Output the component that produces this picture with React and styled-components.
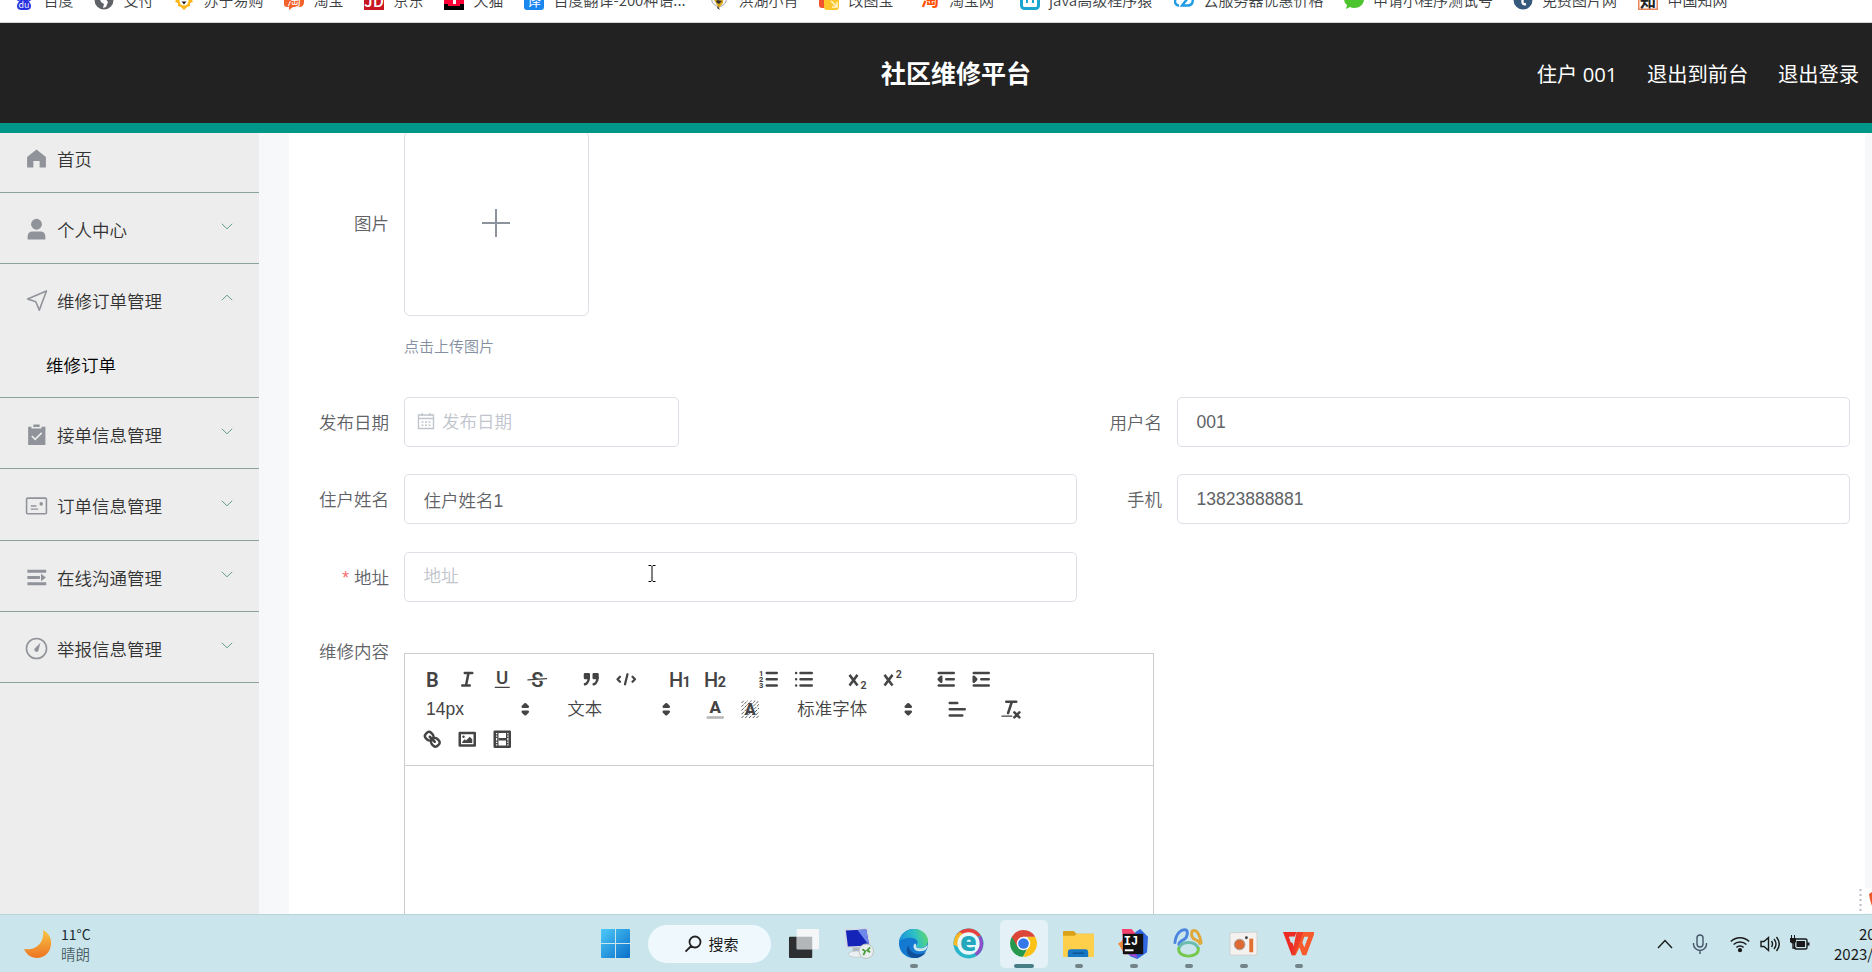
import React from 'react'
import styled, { createGlobalStyle, css } from 'styled-components'

const CJK = "'Noto Sans CJK SC', sans-serif"
const HEADER_FONT = "'Open Sans', 'Noto Sans CJK SC', sans-serif"
const FORM_FONT = "'Liberation Sans', 'Noto Sans CJK SC', sans-serif"

const BOOKMARKS = [
  { label: '百度', icon: 'baidu', width: 80 },
  { label: '支付', icon: 'globe', width: 80 },
  { label: '苏宁易购', icon: 'suning', width: 110 },
  { label: '淘宝', icon: 'taobao', width: 80 },
  { label: '京东', icon: 'jd', width: 80 },
  { label: '天猫', icon: 'tmall', width: 80 },
  { label: '百度翻译-200种语...', icon: 'fanyi', width: 185 },
  { label: '洪湖小肖', icon: 'bee', width: 110 },
  { label: '改图宝', icon: 'gaitu', width: 100.5 },
  { label: '淘宝网', icon: 'tao', width: 100 },
  { label: 'java高级程序猿', icon: 'bili', width: 154.5 },
  { label: '云服务器优惠价格', icon: 'cloud', width: 169.5 },
  { label: '申请小程序测试号', icon: 'wechat', width: 169 },
  { label: '免费图片网', icon: 'photo', width: 125.5 },
  { label: '中国知网', icon: 'cnki', width: 110 },
]

const MENU = [
  { label: '首页', icon: 'home' },
  { label: '个人中心', icon: 'user', arrow: true },
  { label: '维修订单管理', icon: 'send', arrow: true, children: ['维修订单'] },
  { label: '接单信息管理', icon: 'claim', arrow: true },
  { label: '订单信息管理', icon: 'postcard', arrow: true, tall: true },
  { label: '在线沟通管理', icon: 'operation', arrow: true },
  { label: '举报信息管理', icon: 'odometer', arrow: true },
]

const APPS = [
  { name: 'taskview' },
  { name: 'remote' },
  { name: 'edge', running: true },
  { name: 'ie' },
  { name: 'chrome', running: true, active: true },
  { name: 'folder', running: true },
  { name: 'idea', running: true },
  { name: 'navicat', running: true },
  { name: 'recorder', running: true },
  { name: 'wps', running: true },
]

const bookmarkIcons = {
  baidu: (
    <>
      <g fill="#2932e1">
        <ellipse cx="4.5" cy="8" rx="2" ry="3" />
        <ellipse cx="15.5" cy="8" rx="2" ry="3" />
        <path d="M10 8c3 0 7 5 7 8 0 4-3 4-7 4s-7 0-7-4c0-3 4-8 7-8z" />
      </g>
      <text x="10" y="18" fontSize="9" fill="#fff" textAnchor="middle">
        du
      </text>
    </>
  ),
  globe: (
    <>
      <circle cx="10" cy="10" r="9.5" fill="#5f6368" />
      <path d="M5 7l6 1 3 4-2 5-3 1 1-4-3-2z" fill="#fff" />
    </>
  ),
  suning: (
    <>
      <path
        d="M1 6l4-4h10l4 4-1 4 1 2-3 1v3l-3 1-3 3-3-3-3-1v-3l-3-1 1-2z"
        fill="#fdb515"
      />
      <circle cx="10" cy="11" r="4.5" fill="#fff" />
      <path d="M7.5 11.500h5L10 14.500z" fill="#222" />
    </>
  ),
  taobao: (
    <>
      <path
        d="M3 0h14q3 0 3 3v9q0 5-5 5H9l-4 3v-3H3q-3 0-3-3V3q0-3 3-3z"
        fill="#f4622b"
      />
      <text x="10" y="15" fontSize="14" fill="#fff" textAnchor="middle">
        淘
      </text>
    </>
  ),
  jd: (
    <>
      <path fill="#c81623" d="M0 0h20v20H0z" />
      <text
        x="10"
        y="17"
        fontSize="16"
        fontWeight="500"
        fill="#fff"
        textAnchor="middle"
      >
        JD
      </text>
    </>
  ),
  tmall: (
    <>
      <path fill="#000" d="M0 0h20v20H0z" />
      <path fill="#ff0036" d="M0 0h20v14H16v2H4v-2H0z" />
      <path fill="#fff" d="M9 9h3v5H9z" />
    </>
  ),
  fanyi: (
    <>
      <rect width="20" height="20" rx="3" fill="#1a86f0" />
      <text x="10" y="16" fontSize="14" fill="#fff" textAnchor="middle">
        译
      </text>
    </>
  ),
  bee: (
    <>
      <circle cx="10" cy="9" r="7.5" fill="#f4f4f4" stroke="#aaa" />
      <path d="M4 8h10v5l-4 5-2-3z" fill="#d9a91a" />
      <path d="M8 10l5 1-3 3-3-2zM9 16l2 4-3-2z" fill="#333" />
    </>
  ),
  gaitu: (
    <>
      <rect width="12" height="18" rx="3" fill="#f4522d" />
      <rect x="5" y="2" width="15" height="18" rx="3" fill="#fcc62d" />
      <path
        d="M12 11l6 6M18 12v5h-5"
        stroke="#fff3c8"
        strokeWidth="1.6"
        fill="none"
      />
    </>
  ),
  tao: (
    <text
      x="10"
      y="15.5"
      fontSize="18"
      fontWeight="700"
      fill="#ff5000"
      textAnchor="middle"
    >
      淘
    </text>
  ),
  bili: (
    <>
      <rect
        x="1.5"
        y="3"
        width="17"
        height="15.5"
        rx="3"
        fill="#fff"
        stroke="#1ba6cf"
        strokeWidth="3"
      />
      <path d="M6 10h2v3H6zM12 10h2v3h-2z" fill="#1ba6cf" />
    </>
  ),
  cloud: (
    <path
      d="M5 15.5a4 4 0 010-8 6 6 0 0111-1 4.800 4.800 0 01-1 9H8L14 8"
      fill="none"
      stroke="#209ce4"
      strokeWidth="2.400"
    />
  ),
  wechat: (
    <path
      d="M10 0c6 0 10 4 10 9s-4 9-10 9q-2 0-4-1l-4 2 1-4Q0 13 0 9c0-5 4-9 10-9z"
      fill="#4cc42e"
    />
  ),
  photo: (
    <>
      <circle cx="10" cy="10" r="9.500" fill="#36597c" />
      <path
        d="M9.500 5v7q0 3 3.500 2"
        stroke="#fff"
        strokeWidth="2.400"
        fill="none"
      />
    </>
  ),
  cnki: (
    <>
      <path
        d="M.75.75h18.500v18.500H.75z"
        fill="#fff"
        stroke="#e8835a"
        strokeWidth="1.500"
      />
      <text
        x="10"
        y="16.5"
        fontSize="16"
        fontWeight="700"
        fill="#222"
        textAnchor="middle"
      >
        知
      </text>
    </>
  ),
}

const menuIcons = {
  home: (
    <path d="M11 2.500L2 9.500V19.500h6v-6h6v6h6V9.500z" fill="currentColor" />
  ),
  user: (
    <g fill="currentColor">
      <circle cx="11" cy="6" r="5.200" />
      <path d="M2.500 20.500v-2.500q0-5 5-5h7q5 0 5 5v2.500z" />
    </g>
  ),
  send: (
    <path
      d="M20.500 2L2.500 9.600l7.800 2.600 3.400 8z"
      fill="none"
      stroke="currentColor"
      strokeWidth="1.500"
      strokeLinejoin="round"
    />
  ),
  claim: (
    <>
      <path
        d="M3 3.500h3.200v1.800h9.600V3.500H19.500V21H3zM8 1.500h6v2.300H8z"
        fill="currentColor"
      />
      <path
        d="M6.500 12.500l3.200 3.200L16 9.500"
        fill="none"
        stroke="#ededed"
        strokeWidth="1.500"
      />
    </>
  ),
  postcard: (
    <>
      <rect
        x="1.500"
        y="3"
        width="19"
        height="15"
        rx="1"
        fill="none"
        stroke="currentColor"
        strokeWidth="1.500"
      />
      <path
        d="M5.500 10.500H11M5.500 13.500h7"
        stroke="currentColor"
        strokeWidth="1.300"
      />
      <circle cx="15.500" cy="8.500" r="1.700" fill="currentColor" />
    </>
  ),
  operation: (
    <>
      <path
        d="M2.300 5h18M2.300 11h12M2.300 17h18"
        stroke="currentColor"
        strokeWidth="2.800"
      />
      <path d="M15.300 7.300l4.700 3.700-4.700 3.700z" fill="currentColor" />
    </>
  ),
  odometer: (
    <>
      <circle
        cx="11"
        cy="11"
        r="9.600"
        fill="none"
        stroke="currentColor"
        strokeWidth="1.500"
      />
      <path d="M14.700 5.500L12.900 12.800a2 2 0 11-3.400-2z" fill="currentColor" />
    </>
  ),
}

// Toolbar glyphs share an 18-unit grid with 2-unit round strokes
const toolIcons = {
  bold: (
    <Glyph x="9" y="14.800" size="16" weight="600">
      B
    </Glyph>
  ),
  italic: <path d="M7 4h6M5 14h6M8 14L10 4" />,
  underline: (
    <>
      <Glyph x="9" y="13" size="15" weight="500">
        U
      </Glyph>
      <path d="M3 15.500h12" strokeWidth="1" strokeLinecap="butt" />
    </>
  ),
  strike: (
    <>
      <Glyph x="9" y="14.800" size="16" weight="600">
        S
      </Glyph>
      <path d="M3 9.900L15 9.100" stroke="#fff" strokeWidth="1.800" />
      <path d="M1.500 9.500L16.500 8.500" strokeWidth="1" />
    </>
  ),
  quote: (
    <>
      <path d="M4 5h3v3H4zM11 5h3v3h-3z" fill="#444" />
      <path d="M7 8c0 4-3 5-3 5M14 8c0 4-3 5-3 5" />
    </>
  ),
  code: <path d="M4 7L2 9l2 2M14 7l2 2-2 2M10 5L8 13" strokeWidth="1.800" />,
  h1: (
    <>
      <Glyph x="5.700" y="14.800" size="16" weight="500">
        H
      </Glyph>
      <Glyph x="14" y="14.800" size="11.500" weight="700">
        1
      </Glyph>
    </>
  ),
  h2: (
    <>
      <Glyph x="5.700" y="14.800" size="16" weight="500">
        H
      </Glyph>
      <Glyph x="14.200" y="14.800" size="11.500" weight="700">
        2
      </Glyph>
    </>
  ),
  ordered: (
    <>
      <path d="M7 4h8M7 9h8M7 14h8" />
      <Glyph x="2.600" y="6.200" size="6" weight="800">
        1
      </Glyph>
      <Glyph x="2.600" y="11.200" size="6" weight="800">
        2
      </Glyph>
      <Glyph x="2.600" y="16.200" size="6" weight="800">
        3
      </Glyph>
    </>
  ),
  bullet: <path d="M6 4h9M6 9h9M6 14h9M2.500 4h0M2.500 9h0M2.500 14h0" />,
  sub: (
    <>
      <path
        d="M2.800 5.500l6.400 8.500M9.200 5.500l-6.400 8.500"
        strokeLinecap="butt"
      />
      <Glyph x="14" y="16.500" size="8.500" weight="600">
        2
      </Glyph>
    </>
  ),
  sup: (
    <>
      <path
        d="M2.800 5.500l6.400 8.500M9.200 5.500l-6.400 8.500"
        strokeLinecap="butt"
      />
      <Glyph x="14.200" y="8.300" size="8.500" weight="600">
        2
      </Glyph>
    </>
  ),
  outdent: (
    <>
      <path d="M3 4h12M9 9h6M3 14h12" />
      <path d="M5 7v4L3 9z" fill="#444" />
    </>
  ),
  indent: (
    <>
      <path d="M3 4h12M9 9h6M3 14h12" />
      <path d="M3 7v4l2-2z" fill="#444" />
    </>
  ),
  color: (
    <>
      <Glyph x="9" y="12" size="13.500" weight="800">
        A
      </Glyph>
      <path d="M3 15.500h12" opacity=".4" />
    </>
  ),
  background: (
    <>
      <path
        d="M2 4l2-2M2 7l5-5M2 10l8-8M2 13l11-11M2 16L16 2M5 16L16 5M8 16l8-8M11 16l5-5M14 16l2-2"
        strokeWidth=".7"
        strokeDasharray="2.500 .8"
        strokeLinecap="butt"
      />
      <Glyph x="9" y="13.700" size="13" weight="800">
        A
      </Glyph>
    </>
  ),
  align: <path d="M3 4h6M3 9h12M3 14h10" />,
  clean: (
    <>
      <path d="M5 3h8M6.500 12L9.500 3M11.500 11.500l4 4M15.500 11.500l-4 4" />
      <path d="M1.500 14.500h8" strokeWidth="1" />
    </>
  ),
  link: (
    <>
      <path d="M7 7l4 4" />
      <path d="M8.900 4.577a3.476 3.476 0 01.360 4.679A3.476 3.476 0 014.577 8.900C3.185 7.500 2.035 6.400 4.217 4.217S7.500 3.185 8.900 4.577z" />
      <path d="M13.423 9.100a3.476 3.476 0 00-4.679-.360 3.476 3.476 0 00.360 4.679c1.392 1.392 2.500 2.542 4.679.360S14.815 10.500 13.423 9.100z" />
    </>
  ),
  image: (
    <>
      <rect x="3" y="4" width="12" height="10" />
      <circle cx="6" cy="7" r="1" fill="#444" stroke="none" />
      <path d="M5 12v-1l2-2 1 1 3-3 2 2v3z" fill="#444" stroke="none" />
    </>
  ),
  video: (
    <>
      <rect x="3" y="3" width="12" height="12" />
      <path d="M5.500 3v12M12.500 3v12" strokeWidth="1" strokeLinecap="butt" />
      <path d="M6 9h6" strokeLinecap="butt" />
      <path
        d="M4 5.500h1.500M4 7.500h1.500M4 10.500h1.500M4 12.500h1.500M12.500 5.500H14M12.500 7.500H14M12.500 10.500H14M12.500 12.500H14"
        strokeWidth="1"
        strokeLinecap="butt"
      />
    </>
  ),
}

const appIcons = {
  taskview: (
    <>
      <rect x="1" y="9" width="24" height="22" rx="1" fill="#2c2e30" />
      <rect x="9" y="1" width="23" height="21" rx="1" fill="#f4f6f7" />
      <path d="M9 9h16v13H9z" fill="#b3b7b9" />
    </>
  ),
  remote: (
    <>
      <path d="M1 1l25-1 3 20-26 1z" fill="#d3d9e3" />
      <path d="M3 2.500l21-1 3 16.500-22 1z" fill="#1524b8" />
      <path d="M15 2l9-.5 3 16.500z" fill="#6d87ea" />
      <path d="M10 20h8l1 5h-9z" fill="#aeb7be" />
      <ellipse cx="14" cy="27" rx="8.5" ry="3.200" fill="#eceff1" stroke="#b5bdc3" strokeWidth=".6" />
      <circle cx="24" cy="24" r="7.500" fill="#e9eeee" stroke="#b9c1c1" />
      <path
        d="M20 22l3 2-2 4M28 20l-3 3 3 2"
        stroke="#4a9b3b"
        strokeWidth="1.800"
        fill="none"
      />
    </>
  ),
  edge: (
    <>
      <defs>
        <linearGradient id="edgeTop" x1="0" x2="1" y1=".4" y2=".2">
          <stop offset="0" stopColor="#1b93dc" />
          <stop offset=".55" stopColor="#2ec0c4" />
          <stop offset="1" stopColor="#63d968" />
        </linearGradient>
      </defs>
      <circle cx="16" cy="16" r="15" fill="#1479d0" />
      <path
        d="M1 14C3 4 11 1 17 1c9 0 14 7 14 12 0 5-4 8-8 8s-5-2-4-3c3-4 0-8-6-8-5 0-10 2-12 4z"
        fill="url(#edgeTop)"
      />
      <path
        d="M11 18c0 6 6 9 11 9 3 0 5-1 7-2-3 4-7 6-11 6C9 31 7 22 11 18z"
        fill="#10509a"
      />
      <path
        d="M19 18c-1 1 0 3 4 3 3 0 5-1 8-4-1 4-2 5-3 6-5 2-12 1-12-4 0-2 1-3 2-3z"
        fill="#cbe6ec"
      />
    </>
  ),
  ie: (
    <>
      <circle cx="16" cy="16" r="15.5" fill="#29b6c8" />
      <path
        d="M2 10A15.500 15.500 0 0116 .5a15.500 15.500 0 0113 8L16 9z"
        fill="#e8403c"
      />
      <path d="M.5 17A15.500 15.500 0 017 4l6 4-7 12z" fill="#f5b924" />
      <path d="M29 8a15.500 15.500 0 01-5 21l-3-6 4-12z" fill="#8b50c7" />
      <circle cx="16" cy="16" r="11.5" fill="#e9f8fa" />
      <text
        x="16"
        y="24"
        fontSize="28"
        fontWeight="800"
        fontFamily="Open Sans"
        fill="#22a7bd"
        textAnchor="middle"
      >
        e
      </text>
    </>
  ),
  chrome: (
    <>
      <path
        d="M4 9.100A13.800 13.800 0 0015.500 29.800L20.500 20 16 16z"
        fill="#26994f"
      />
      <path
        d="M28 9.100A13.800 13.800 0 0115.500 29.800L21.500 19 20 9.100z"
        fill="#fbc116"
      />
      <path
        d="M4 9.100A13.800 13.800 0 0128 9.100H16L10 19.500z"
        fill="#dc4638"
      />
      <circle cx="16" cy="16" r="7" fill="#fff" />
      <circle cx="16" cy="16" r="5.500" fill="#3678e8" />
    </>
  ),
  folder: (
    <>
      <path d="M0 4q0-1 1-1h10l3 3h17q1 0 1 1v6H0z" fill="#dba117" />
      <path d="M0 8h12l2-2h18v23q0 1-1 1H1q-1 0-1-1z" fill="#fdcf4a" />
      <path d="M5 30v-5q0-3 3-3h15q3 0 3 3v5z" fill="#1777c4" />
      <path d="M10 26h12" stroke="#0c5792" strokeWidth="1.500" />
    </>
  ),
  idea: (
    <>
      <path d="M4 1l10 0 6 7-6 12-9 4-3-6 3-7z" fill="#f5416c" />
      <path d="M0 16l7-4 6 10-5 6z" fill="#f68a3c" />
      <path d="M18 4l5-3 8 8-1 16-10 7-8-3z" fill="#3066e0" />
      <path d="M10 27l8-2 2 6z" fill="#a347d6" />
      <path d="M5 6h21v21H5z" fill="#111" />
      <text
        x="13.500"
        y="17.500"
        fontSize="12.500"
        fontWeight="700"
        fontFamily="Liberation Mono"
        fill="#fff"
        textAnchor="middle"
      >
        IJ
      </text>
      <path d="M7 22h9v2H7z" fill="#fff" />
    </>
  ),
  navicat: (
    <g fill="none" strokeWidth="3" strokeLinecap="round">
      <path
        d="M2 15C3 5 9 1 13 2c3 1 2 8-2 10-4 2-5 3-5 5"
        stroke="#4d86e0"
      />
      <path
        d="M20 3c5-2 8 5 9 12M20 3c-2 4 0 8 3 9 3 1 4 2 5 4"
        stroke="#e0a73b"
      />
      <path d="M6 21c3-8 17-8 20 0" stroke="#69bcae" />
      <path d="M6 21c-1 5 4 8 10 8s11-3 10-8" stroke="#77c84f" />
    </g>
  ),
  recorder: (
    <>
      <path d="M2 5l28-1v24H2z" fill="#f4f1ee" stroke="#c9cfd0" />
      <circle cx="12" cy="17" r="5.500" fill="#dd6a35" stroke="#a2a6a6" />
      <circle cx="19" cy="10" r="1.500" fill="#444" />
      <path d="M22 11h4v14h-4z" fill="#e27030" />
    </>
  ),
  wps: (
    <>
      <path d="M0 4h14l-2 5H7l5 12-3 7z" fill="#ee2a24" />
      <path d="M9 28L20 4h13l-9 24h-4l-3-8-4 8z" fill="#f65b2d" />
      <path d="M14 4h7l-9 24H9z" fill="#ee3a26" />
      <path d="M22 9h4l-4 11-2-5z" fill="#cae6ec" />
      <path d="M6 9h6l-2 6-2 0z" fill="#cae6ec" />
    </>
  ),
}

function Glyph({ x, y, size, weight, children }) {
  return (
    <text
      x={x}
      y={y}
      fontSize={size}
      fontWeight={weight}
      fontFamily="Roboto, sans-serif"
      fill="#444"
      stroke="none"
      textAnchor="middle"
    >
      {children}
    </text>
  )
}

function Chevron({ up }) {
  return (
    <Arrow viewBox="0 0 12 7" $up={up}>
      <path d="M.8.800L6 5.800 11.200.800" fill="none" stroke="currentColor" />
    </Arrow>
  )
}

function Tools({ names }) {
  return (
    <Formats>
      {names.map(name => (
        <ToolButton key={name}>
          <svg viewBox="0 0 18 18">{toolIcons[name]}</svg>
        </ToolButton>
      ))}
    </Formats>
  )
}

function Picker({ label, width }) {
  return (
    <Formats>
      <PickerLabel $width={width}>
        {label}
        <svg viewBox="0 0 18 18">
          <path d="M7 11l2 2 2-2zM7 7l2-2 2 2z" fill="#444" />
        </svg>
      </PickerLabel>
    </Formats>
  )
}

function Field({ label, value, placeholder, required, icon, width }) {
  return (
    <FormItem>
      <Label $required={required}>{label}</Label>
      <Control $width={width} $empty={!value} $icon={icon}>
        {icon}
        {value || placeholder}
      </Control>
    </FormItem>
  )
}

const calendar = (
  <svg viewBox="0 0 18 18" width="18" height="18">
    <path
      d="M1.500 3h15v13.500h-15zM1.500 6.500h15M5 1v3M13 1v3M4.500 10h2M8 10h2M11.500 10h2M4.500 13.200h2M8 13.200h2M11.500 13.200h2"
      fill="none"
      stroke="currentColor"
      strokeWidth="1.400"
    />
  </svg>
)

export default function App() {
  return (
    <Screen>
      <GlobalStyle />
      <BookmarkBar>
        {BOOKMARKS.map(({ label, icon, width }) => (
          <Bookmark key={label} $width={width}>
            <svg viewBox="0 0 20 20">{bookmarkIcons[icon]}</svg>
            {label}
          </Bookmark>
        ))}
      </BookmarkBar>

      <Header>
        <HeaderSide />
        <Title>社区维修平台</Title>
        <HeaderSide>
          <span>住户 001</span>
          <span>退出到前台</span>
          <span>退出登录</span>
        </HeaderSide>
      </Header>

      <Body>
        <Sidebar>
          {MENU.map(({ label, icon, arrow, children, tall }) => (
            <MenuGroup key={label}>
              <MenuItem $tall={tall}>
                <svg viewBox="0 0 22 22">{menuIcons[icon]}</svg>
                <MenuText>{label}</MenuText>
                {arrow && <Chevron up={!!children} />}
              </MenuItem>
              {children &&
                children.map(child => <SubItem key={child}>{child}</SubItem>)}
            </MenuGroup>
          ))}
        </Sidebar>

        <Main>
          <UploadItem>
            <UploadLabel>图片</UploadLabel>
            <div>
              <UploadBox>
                <svg viewBox="0 0 28 28" width="28" height="28">
                  <path
                    d="M14 0v28M0 14h28"
                    stroke="currentColor"
                    strokeWidth="2"
                  />
                </svg>
              </UploadBox>
              <Tip>点击上传图片</Tip>
            </div>
          </UploadItem>
          <Grid>
            <Field
              label="发布日期"
              placeholder="发布日期"
              icon={calendar}
              width="275px"
            />
            <Field label="用户名" value="001" />
            <Field label="住户姓名" value="住户姓名1" />
            <Field label="手机" value="13823888881" />
            <Field label="地址" placeholder="地址" required />
          </Grid>
          <EditorItem>
            <Label>维修内容</Label>
            <Editor>
              <Toolbar>
                <Tools names={['bold', 'italic', 'underline', 'strike']} />
                <Tools names={['quote', 'code']} />
                <Tools names={['h1', 'h2']} />
                <Tools names={['ordered', 'bullet']} />
                <Tools names={['sub', 'sup']} />
                <Tools names={['outdent', 'indent']} />
                <Picker label="14px" width={122.5} />
                <Picker label="文本" width={122.5} />
                <Tools names={['color', 'background']} />
                <Picker label="标准字体" width={135} />
                <Tools names={['align']} />
                <Tools names={['clean']} />
                <Tools names={['link', 'image', 'video']} />
              </Toolbar>
            </Editor>
          </EditorItem>
        </Main>
      </Body>

      <Taskbar>
        <Weather>
          <svg viewBox="0 0 28 30" width="28" height="30">
            <defs>
              <linearGradient id="moon" x1="0" x2="0" y1="0" y2="1">
                <stop offset="0" stopColor="#f8c544" />
                <stop offset="1" stopColor="#ee7422" />
              </linearGradient>
            </defs>
            <path
              d="M19 1c6 3 9 9 8 15-1 8-7 13-14 13C7 29 2 25 0 20c9 2 21-4 19-19z"
              fill="url(#moon)"
            />
          </svg>
          <div>
            <Degrees>11°C</Degrees>
            <Sky>晴朗</Sky>
          </div>
        </Weather>
        <Start viewBox="0 0 29 29">
          <defs>
            <linearGradient id="win" x1="0" x2="1" y1="0" y2="1">
              <stop offset="0" stopColor="#4cc9f8" />
              <stop offset="1" stopColor="#0a6fc9" />
            </linearGradient>
          </defs>
          <path
            d="M1 0h13v14H0V1q0-1 1-1zM15 0h13q1 0 1 1v13H15zM0 15h14v14H1q-1 0-1-1zM15 15h14v13q0 1-1 1H15z"
            fill="url(#win)"
          />
        </Start>
        <Search>
          <svg viewBox="0 0 18 18" width="18" height="18">
            <path
              d="M11 1.500a5.500 5.500 0 110 11 5.500 5.500 0 010-11zM7.200 11L1.500 16.700"
              fill="none"
              stroke="#222"
              strokeWidth="1.800"
            />
          </svg>
          搜索
        </Search>
        {APPS.map(({ name, running, active }) => (
          <AppSlot key={name}>
            <AppTile $active={active}>
              <svg viewBox="0 0 32 32">{appIcons[name]}</svg>
              {running && <Indicator $active={active} />}
            </AppTile>
          </AppSlot>
        ))}
        <Tray>
          <svg viewBox="0 0 16 20" width="16" height="20">
            <path d="M1 14l7-7.500L15 14" />
          </svg>
          <svg viewBox="0 0 16 20" width="16" height="20">
            <rect x="5" y="1" width="6" height="12" rx="3" stroke="#456" />
            <path
              d="M1.500 9v1a6.500 6.500 0 0013 0V9M8 16.500v3.500"
              stroke="#456"
            />
          </svg>
          <svg viewBox="0 0 20 20" width="20" height="20">
            <path d="M.8 7.500a13 13 0 0118.400 0M3.600 10.600a9 9 0 0112.800 0M6.400 13.500a5 5 0 017.200 0" />
            <circle cx="10" cy="16.200" r="1.400" fill="#1a1a1a" />
          </svg>
          <svg viewBox="0 0 20 20" width="20" height="20">
            <path d="M1 7.500h3L8.500 3.500v13L4 12.500H1zM11.500 7q2 3 0 6M14 5q4 5 0 10M16.500 3q5.500 7 0 14" />
          </svg>
          <svg viewBox="0 0 20 20" width="20" height="20">
            <rect x="4.500" y="5" width="12.500" height="10" rx="1.500" />
            <path
              d="M6.500 7h8.500v6H6.500zM17 8.500h2.500v3H17zM0 4h6v4L4 9.500H2L0 8zM1 1h1v3H1zM4 1h1v3H4z"
              fill="#1a1a1a"
              stroke="none"
            />
            <path d="M3 9v5h3" />
          </svg>
        </Tray>
        <Clock>
          <ClockTime>20</ClockTime>
          <div>2023/</div>
        </Clock>
      </Taskbar>

      <FloatingDock>
        <svg viewBox="0 0 15 25" width="15" height="25">
          <path
            d="M3.500 1v24"
            stroke="#b9b9c4"
            strokeWidth="2"
            strokeDasharray="2 3"
          />
          <path d="M12 6l3-2v14q-2-5-3-12z" fill="#f0582a" />
        </svg>
      </FloatingDock>
      <TextCursor viewBox="0 0 8 17">
        <path
          d="M.5.500H3L4 1.500 5 .500h2.500M4 1.500v14M.5 16.500H3l1-1 1 1h2.500"
          fill="none"
          stroke="#000"
        />
      </TextCursor>
    </Screen>
  )
}

const GlobalStyle = createGlobalStyle`
  * {
    box-sizing: border-box;
  }
  body {
    margin: 0;
    overflow: hidden;
  }
  svg {
    display: block;
    flex: none;
  }
`

const Screen = styled.div`
  position: relative;
  display: flex;
  flex-direction: column;
  width: 1872px;
  height: 972px;
  overflow: hidden;
  font-family: ${CJK};
  font-weight: 350;
  background: #fff;
`

const BookmarkBar = styled.nav`
  flex: none;
  display: flex;
  height: 23px;
  padding-left: 14px;
  overflow: hidden;
  background: #fff;
  border-bottom: 1px solid #d5d5d5;
`

const Bookmark = styled.div`
  flex: none;
  display: flex;
  align-items: center;
  gap: 9.5px;
  width: ${p => p.$width}px;
  height: 20px;
  margin-top: -10px;
  font-size: 15px;
  line-height: 20px;
  white-space: nowrap;
  color: #3c4043;
  svg {
    width: 20px;
    height: 20px;
  }
`

const Header = styled.header`
  flex: none;
  display: flex;
  align-items: center;
  height: 110px;
  padding-right: 13px;
  background: #222;
  border-bottom: 10px solid #009688;
  color: #fff;
`

const HeaderSide = styled.div`
  flex: 1;
  display: flex;
  justify-content: flex-end;
  gap: 29.5px;
  padding-left: 52px;
  font-family: ${HEADER_FONT};
  font-size: 20.3px;
  font-weight: 400;
  &:first-child {
    padding-left: 105px;
  }
`

const Title = styled.h1`
  margin: -2px 0 0;
  font-size: 25px;
  font-weight: 700;
`

const Body = styled.div`
  flex: 1;
  min-height: 0;
  display: flex;
  padding-right: 7px;
  overflow: hidden;
  background: #f6f8fa;
`

const Sidebar = styled.aside`
  flex: none;
  width: 259px;
  margin: -11px 30px 0 0;
  background: #ededed;
`

const MenuGroup = styled.div`
  border-bottom: 1px solid #8aa39b;
`

const MenuItem = styled.div`
  display: flex;
  align-items: center;
  height: ${p => (p.$tall ? 71 : 70)}px;
  padding: 0 26px 0 25px;
  color: #909399;
  > svg:first-child {
    width: 23px;
    height: 23px;
    margin-top: 3px;
  }
`

const MenuText = styled.span`
  flex: 1;
  padding: 3px 0 0 9px;
  font-size: 17.5px;
  line-height: 24px;
  color: #333;
`

const Arrow = styled.svg`
  width: 12px;
  height: 7px;
  margin-top: -3px;
  color: #62a088;
  ${p =>
    p.$up &&
    css`
      transform: rotate(180deg);
    `};
`

const SubItem = styled.div`
  height: 63px;
  padding-left: 46px;
  font-size: 17.5px;
  line-height: 62px;
  color: #000;
`

const Main = styled.main`
  flex: 1;
  margin-top: -2px;
  padding: 0 15px;
  background: #fff;
  font-family: ${FORM_FONT};
`

const FormItem = styled.div`
  display: flex;
`

const UploadItem = styled(FormItem)`
  height: 266px;
`

const Label = styled.label`
  flex: none;
  width: 100px;
  padding-right: 15px;
  font-size: 17.5px;
  line-height: 52px;
  text-align: right;
  color: #606266;
  ${p =>
    p.$required &&
    css`
      &::before {
        content: '*';
        margin-right: 5px;
        color: #f56c6c;
      }
    `};
`

const UploadLabel = styled(Label)`
  line-height: 187px;
`

const UploadBox = styled.div`
  display: flex;
  align-items: center;
  justify-content: center;
  width: 185px;
  height: 185px;
  padding: 0 1px 1px 0;
  border: 1px solid #dcdfe6;
  border-radius: 6px;
  color: #8c939d;
`

const Tip = styled.div`
  margin-top: 20px;
  font-size: 15px;
  line-height: 22px;
  color: #838fa1;
`

const Grid = styled.div`
  display: grid;
  grid-template-columns: 1fr 1fr;
  grid-auto-rows: 50px;
  row-gap: 27.4px;
`

const Control = styled.div`
  display: flex;
  align-items: center;
  gap: 7px;
  flex: ${p => (p.$width ? 'none' : 1)};
  width: ${p => p.$width || 'auto'};
  padding: 0 18px ${p => (p.$empty ? 4 : 0)}px ${p => (p.$icon ? 12 : 18.5)}px;
  font-size: 17.5px;
  border: 1px solid #dcdfe6;
  border-radius: 5px;
  color: ${p => (p.$empty ? '#c0c4cc' : '#606266')};
  svg {
    margin-top: 2px;
  }
`

const EditorItem = styled(FormItem)`
  margin-top: 24.2px;
`

const Editor = styled.div`
  width: 750px;
  height: 340px;
  margin-top: 27px;
  border: 1px solid #ccc;
`

const Toolbar = styled.div`
  display: flex;
  flex-wrap: wrap;
  padding: 10px 10px 11px;
  border-bottom: 1px solid #ccc;
`

const Formats = styled.div`
  display: flex;
  height: 30px;
  margin-right: 18.75px;
`

const ToolButton = styled.button`
  width: 35px;
  height: 30px;
  padding: 3.75px 6.25px;
  border: 0;
  background: none;
  svg {
    width: 22.5px;
    height: 22.5px;
    overflow: visible;
    fill: none;
    stroke: #444;
    stroke-width: 2;
    stroke-linecap: round;
    stroke-linejoin: round;
  }
`

const PickerLabel = styled.div`
  display: flex;
  align-items: center;
  justify-content: space-between;
  width: ${p => p.$width}px;
  padding: 0 1.5px 0 11px;
  font-size: 17.5px;
  line-height: 30px;
  color: #444;
  svg {
    width: 22.5px;
    height: 22.5px;
    stroke: #444;
    stroke-width: 2;
    stroke-linejoin: round;
  }
`

const Taskbar = styled.footer`
  flex: none;
  display: flex;
  align-items: center;
  height: 58px;
  overflow: hidden;
  background: #cae6ec;
  border-top: 1px solid #b8d4da;
  > * {
    flex: none;
  }
`

const Weather = styled.div`
  display: flex;
  align-items: center;
  gap: 9.5px;
  width: 601px;
  padding-left: 23.5px;
  font-size: 14.5px;
  line-height: 20px;
`

const Degrees = styled.div`
  font-size: 14px;
  font-weight: 400;
  color: #1b2b30;
`

const Sky = styled.div`
  color: #4c5f66;
`

const Start = styled.svg`
  width: 29px;
  height: 29px;
  margin-right: 18px;
`

const Search = styled.div`
  display: flex;
  align-items: center;
  justify-content: center;
  gap: 6px;
  width: 123px;
  height: 38px;
  margin-right: 5px;
  padding-left: 4px;
  border-radius: 19px;
  background: #eff8fc;
  font-size: 15px;
  font-weight: 400;
  color: #1a1a1a;
`

const AppSlot = styled.div`
  display: flex;
  justify-content: center;
  width: 55px;
`

const AppTile = styled.div`
  position: relative;
  display: flex;
  align-items: center;
  justify-content: center;
  width: 48px;
  height: 48px;
  border-radius: 5px;
  background: ${p => (p.$active ? '#e4f2f7' : 'none')};
  svg {
    width: 31px;
    height: 31px;
  }
`

const Indicator = styled.i`
  position: absolute;
  bottom: 0;
  left: 50%;
  width: ${p => (p.$active ? 20 : 8)}px;
  height: 4px;
  border-radius: 2px;
  background: ${p => (p.$active ? '#477e86' : '#738489')};
  transform: translateX(-50%);
`

const Tray = styled.div`
  display: flex;
  align-items: center;
  margin-left: 331px;
  svg {
    fill: none;
    stroke: #1a1a1a;
    stroke-width: 1.4;
  }
  svg:nth-child(2) {
    margin: 0 22px 0 19px;
  }
  svg:nth-child(n + 4) {
    margin-left: 10px;
  }
`

const Clock = styled.div`
  width: 48px;
  margin-left: 24px;
  font-size: 15px;
  font-weight: 400;
  line-height: 20px;
  color: #1a1a1a;
`

const ClockTime = styled.div`
  padding-left: 25px;
`

const FloatingDock = styled.div`
  position: absolute;
  top: 888px;
  right: 0;
  width: 15px;
  height: 25px;
  background: #fff;
`

const TextCursor = styled.svg`
  position: absolute;
  top: 565px;
  left: 648px;
  width: 8px;
  height: 17px;
`
